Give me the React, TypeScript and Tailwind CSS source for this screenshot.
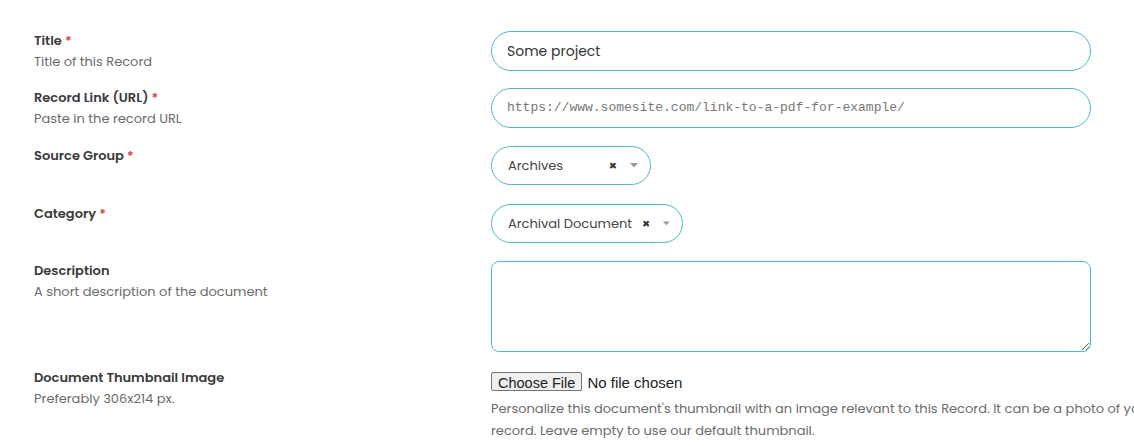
import React from 'react';

const sans = "font-['Poppins','Noto_Sans','Open_Sans',sans-serif]";

function Label({ title, hint, required }: { title: string; hint?: string; required?: boolean }) {
  return (
    <div className="w-[491px] shrink-0 pl-[34px]">
      <div className="text-[13px] leading-[21px] font-semibold text-[#3a3a3a]">
        {title}
        {required && <span className="text-[#d63c3c]"> *</span>}
      </div>
      {hint && <div className="text-[13px] leading-[22px] text-[#6b6b6b]">{hint}</div>}
    </div>
  );
}

function SelectBox({ value, width }: { value: string; width: string }) {
  return (
    <div
      className={`${width} h-[39px] rounded-full border border-[#4fb9ca] flex items-center pl-[16px] pr-[12px] text-[13px] text-[#444]`}
    >
      <span className="flex-1 whitespace-nowrap">{value}</span>
      <span className="ml-[10px] text-[13px] font-bold text-[#333] leading-none mr-[13px]">×</span>
      <svg width="8" height="5" viewBox="0 0 8 5">
        <path d="M0 0 L8 0 L4 4.5 Z" fill="#999" />
      </svg>
    </div>
  );
}

export default function App() {
  return (
    <div className={`w-full h-[446px] overflow-hidden bg-white ${sans}`}>
      <div className="pt-[30px] flex flex-col">
        {/* Title */}
        <div className="flex items-start">
          <Label title="Title" hint="Title of this Record" required />
          <div className="mt-px w-[600px] shrink-0 h-[40px] rounded-full border border-[#4fb9ca] flex items-center px-[15px] text-[14px] text-[#333]">
            Some project
          </div>
        </div>

        {/* Record link */}
        <div className="flex items-start mt-[14px]">
          <Label title="Record Link (URL)" hint="Paste in the record URL" required />
          <div className="mt-px w-[600px] shrink-0 h-[40px] rounded-full border border-[#4fb9ca] flex items-center px-[15px] text-[13px] text-[#777] font-['Liberation_Mono',monospace]">
            https://www.somesite.com/link-to-a-pdf-for-example/
          </div>
        </div>

        {/* Source group */}
        <div className="flex items-start mt-[15px]">
          <Label title="Source Group" required />
          <div className="mt-px">
            <SelectBox value="Archives" width="w-[160px]" />
          </div>
        </div>

        {/* Category */}
        <div className="flex items-start mt-[18px]">
          <Label title="Category" required />
          <div className="mt-px">
            <SelectBox value="Archival Document" width="w-[192px]" />
          </div>
        </div>

        {/* Description */}
        <div className="flex items-start mt-[17px]">
          <Label title="Description" hint="A short description of the document" />
          <textarea className="mt-px w-[600px] shrink-0 h-[91px] rounded-[8px] border border-[#4fb9ca] outline-none px-[15px] py-[8px] text-[14px]" />
        </div>

        {/* Thumbnail */}
        <div className="flex items-start mt-[15px]">
          <Label title="Document Thumbnail Image" hint="Preferably 306x214 px." />
          <div className="w-[676px] shrink-0 mt-[4px]">
            <input
              type="file"
              className="font-['Liberation_Sans',Arial,sans-serif] text-[15px] text-[#222] file:mr-[5px] file:border file:border-[#767676] file:bg-[#efefef] file:rounded-[2px] file:px-[6px] file:py-0 file:h-[19px] file:text-[14.5px]"
            />
            <p className="mt-[3px] text-[13px] leading-[22px] text-[#6b6b6b]">
              Personalize this document's thumbnail with an image relevant to this Record. It can be a photo of your
              record. Leave empty to use our default thumbnail.
            </p>
          </div>
        </div>
      </div>
    </div>
  );
}
